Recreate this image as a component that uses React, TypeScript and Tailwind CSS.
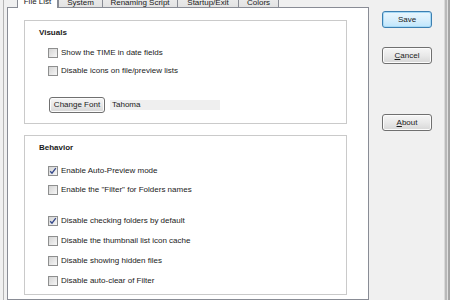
import React from "react";

function Check({ checked, label }: { checked?: boolean; label: string }) {
  return (
    <div className="flex items-center h-[12px] ml-[9px]">
      <div className="w-[10px] h-[10px] border border-[#8e8f8f] bg-gradient-to-br from-[#d4d4d4] to-[#f7f7f7] flex items-center justify-center shrink-0">
        {checked && (
          <svg width="8" height="8" viewBox="0 0 8 8">
            <path d="M1.2 4.2 L3 6.2 L6.8 1.2" fill="none" stroke="#34488a" strokeWidth="1.3" />
          </svg>
        )}
      </div>
      <span className="ml-[3px] text-[8px] leading-[10px] text-[#1a1a1a] whitespace-nowrap">{label}</span>
    </div>
  );
}

function Tab({ label, w, selected }: { label: string; w: string; selected?: boolean }) {
  if (selected) {
    return (
      <div className={`${w} h-[22px] mb-[-1px] bg-white border-l border-r border-t border-[#898c95] flex items-end justify-center pb-[1px] text-[8px] leading-[10px] text-[#1a1a1a] relative z-20`}>
        {label}
      </div>
    );
  }
  return (
    <div className={`${w} h-[18px] -ml-px bg-gradient-to-b from-[#f3f3f3] to-[#e3e3e3] border border-b-0 border-[#898c95] flex items-end justify-center pb-0 text-[8px] leading-[9px] text-[#1a1a1a]`}>
      {label}
    </div>
  );
}

function WinButton({ children, primary, w = "w-[50px]", h = "h-[17px]" }: { children: React.ReactNode; primary?: boolean; w?: string; h?: string }) {
  return (
    <div
      className={`${w} ${h} rounded-[3px] border flex items-center justify-center text-[8px] leading-[10px] text-[#1a1a1a] whitespace-nowrap ${
        primary
          ? "border-[#3c7fb1] bg-gradient-to-b from-[#eaf6fd] via-[#d9effc] to-[#bee6fd] shadow-[inset_0_0_0_1px_#a7d9f5]"
          : "border-[#707070] bg-gradient-to-b from-[#f6f6f6] via-[#e9e9e9] to-[#d7d7d7] shadow-[inset_0_0_0_1px_#fcfcfc]"
      }`}
    >
      {children}
    </div>
  );
}

export default function App() {
  return (
    <div className="w-[450px] h-[300px] overflow-hidden bg-[#f0f0f0] flex font-['Liberation_Sans',Arial,sans-serif]">
      <div className="w-[3px] shrink-0" />
      <div className="w-px shrink-0 bg-[#b4b4b4]" />
      <div className="w-[3px] shrink-0" />
      <div className="w-[362px] shrink-0 flex flex-col">
        <div className="h-[20px] mt-[-13px] flex items-end pl-[10px] relative z-10">
          <Tab label="File List" w="w-[41px]" selected />
          <div className="ml-[1px] flex items-end">
            <Tab label="System" w="w-[45px]" />
            <Tab label="Renaming Script" w="w-[76px]" />
            <Tab label="Startup/Exit" w="w-[62px]" />
            <Tab label="Colors" w="w-[41px]" />
          </div>
        </div>
        <div className="flex-1 bg-white border border-[#898c95] pt-[12px] pl-[16px] pr-[21px]">
          <div className="h-[104px] border border-[#cacaca] pl-[14px] pt-[7px]">
            <div className="h-[10px] text-[8px] leading-[10px] font-bold text-[#1a1a1a]">Visuals</div>
            <div className="mt-[9px]">
              <Check label="Show the TIME in date fields" />
            </div>
            <div className="mt-[6px]">
              <Check label="Disable icons on file/preview lists" />
            </div>
            <div className="mt-[20px] ml-[10px] flex items-center">
              <WinButton w="w-[56px]" h="h-[16px]">Change Font</WinButton>
              <div className="ml-[5px] w-[110px] h-[10px] bg-[#efefef] pl-[2px] text-[8px] leading-[10px] text-[#1a1a1a]">Tahoma</div>
            </div>
          </div>
          <div className="mt-[11px] h-[160px] border border-[#cacaca] pl-[14px] pt-[7px]">
            <div className="h-[10px] text-[8px] leading-[10px] font-bold text-[#1a1a1a]">Behavior</div>
            <div className="mt-[12px]">
              <Check checked label="Enable Auto-Preview mode" />
            </div>
            <div className="mt-[7px]">
              <Check label={'Enable the "Filter" for Folders names'} />
            </div>
            <div className="mt-[19px]">
              <Check checked label="Disable checking folders by default" />
            </div>
            <div className="mt-[8px]">
              <Check label="Disable the thumbnail list icon cache" />
            </div>
            <div className="mt-[8px]">
              <Check label="Disable showing hidden files" />
            </div>
            <div className="mt-[8px]">
              <Check label="Disable auto-clear of Filter" />
            </div>
          </div>
        </div>
      </div>
      <div className="w-[75px] shrink-0 pl-[13px] pt-[11px] flex flex-col">
        <WinButton primary>Save</WinButton>
        <div className="mt-[19px]">
          <WinButton>
            <span className="underline">C</span>ancel
          </WinButton>
        </div>
        <div className="mt-[50px]">
          <WinButton>
            <span className="underline">A</span>bout
          </WinButton>
        </div>
      </div>
      <div className="w-px shrink-0 bg-[#d9d9d9]" />
      <div className="w-[2px] shrink-0 bg-[#b9b9b9]" />
      <div className="w-px shrink-0 bg-[#e0e0e0]" />
      <div className="w-[2px] shrink-0 bg-[#a5a5a5]" />
    </div>
  );
}
